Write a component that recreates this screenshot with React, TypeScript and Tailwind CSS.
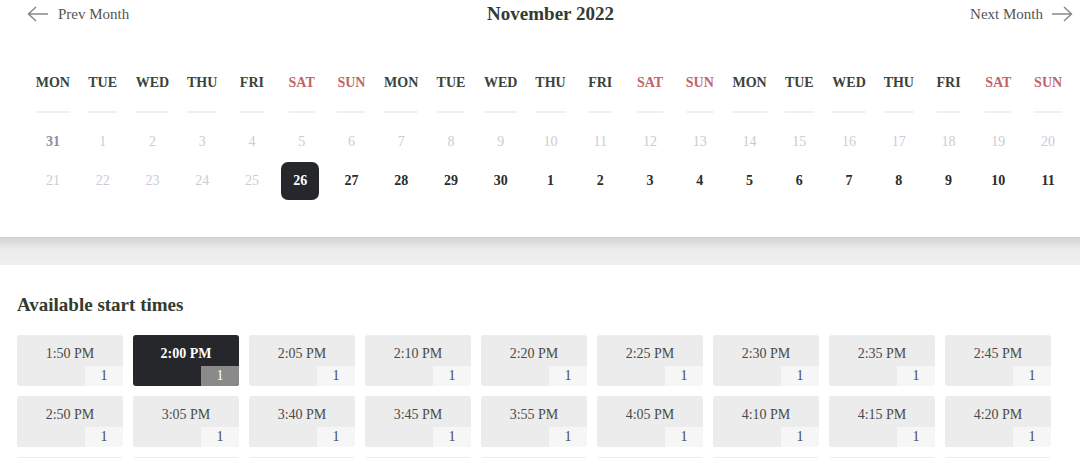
const days = ["MON", "TUE", "WED", "THU", "FRI", "SAT", "SUN"];

type Day = { n: number; kind: "prev" | "faded" | "on" | "sel" };

const row1: Day[] = [
  { n: 31, kind: "prev" },
  ...Array.from({ length: 20 }, (_, i) => ({ n: i + 1, kind: "faded" as const })),
];
const row2: Day[] = [
  ...[21, 22, 23, 24, 25].map((n) => ({ n, kind: "faded" as const })),
  { n: 26, kind: "sel" },
  ...[27, 28, 29, 30].map((n) => ({ n, kind: "on" as const })),
  ...Array.from({ length: 11 }, (_, i) => ({ n: i + 1, kind: "on" as const })),
];

const times = [
  "1:50 PM", "2:00 PM", "2:05 PM", "2:10 PM", "2:20 PM", "2:25 PM", "2:30 PM", "2:35 PM", "2:45 PM",
  "2:50 PM", "3:05 PM", "3:40 PM", "3:45 PM", "3:55 PM", "4:05 PM", "4:10 PM", "4:15 PM", "4:20 PM",
];

function Arrow({ dir }: { dir: "left" | "right" }) {
  return (
    <svg width="22" height="16" viewBox="0 0 22 16" fill="none" stroke="#8a8a8a" strokeWidth="1.5">
      {dir === "left" ? (
        <path d="M1 8H21M9 1L1.5 8L9 15" />
      ) : (
        <path d="M1 8H21M13 1L20.5 8L13 15" />
      )}
    </svg>
  );
}

function DateCell({ d }: { d: Day }) {
  if (d.kind === "sel") {
    return (
      <div className="flex h-[39px] items-center justify-center">
        <span className="-ml-[3px] flex h-[38px] w-[38px] items-center justify-center rounded-[7px] bg-[#25272a] font-bold text-white">
          {d.n}
        </span>
      </div>
    );
  }
  const cls =
    d.kind === "prev"
      ? "font-bold text-[#8b8fa0]"
      : d.kind === "faded"
      ? "text-[#c9ccd4]"
      : "font-bold text-[#2b2b2b]";
  return <div className={`flex h-[39px] items-center justify-center ${cls}`}>{d.n}</div>;
}

export default function App() {
  return (
    <div className="min-h-screen w-[1080px] bg-white font-['Liberation_Serif',serif]">
      {/* calendar */}
      <div className="pl-[28px] pr-[7px] pb-[37px]">
        <div className="relative flex h-[28px] items-center justify-between text-[15px] text-[#555]">
          <div className="-ml-[1px] flex items-center gap-[9px]">
            <Arrow dir="left" />
            <span>Prev Month</span>
          </div>
          <div className="absolute left-1/2 -translate-x-1/2 text-[19px] font-bold text-[#333a31]">
            November 2022
          </div>
          <div className="flex items-center gap-[8px]">
            <span>Next Month</span>
            <Arrow dir="right" />
          </div>
        </div>

        <div className="mt-[47px] grid grid-cols-[repeat(21,minmax(0,1fr))] text-[14px] font-bold leading-[16px]">
          {[...days, ...days, ...days].map((d, i) => (
            <div key={i} className="flex justify-center">
              <span
                className={`border-b-2 border-[#f0f0f0] pb-[20px] ${
                  d === "SAT" || d === "SUN" ? "text-[#c26466]" : "text-[#3b4339]"
                }`}
              >
                {d}
              </span>
            </div>
          ))}
        </div>

        <div className="mt-[9px] grid grid-cols-[repeat(21,minmax(0,1fr))] text-[14px]">
          {row1.map((d, i) => (
            <DateCell key={"a" + i} d={d} />
          ))}
          {row2.map((d, i) => (
            <DateCell key={"b" + i} d={d} />
          ))}
        </div>
      </div>

      {/* divider band */}
      <div className="h-[28px] bg-[linear-gradient(#d2d2d2,#ececec_45%,#f0f0f0)]" />

      {/* times */}
      <div className="px-[17px] pt-[28px]">
        <h2 className="text-[19px] font-bold leading-[24px] text-[#333a31]">Available start times</h2>
        <div className="mt-[18px] grid grid-cols-[repeat(9,106px)] gap-[10px]">
          {times.map((t) => {
            const sel = t === "2:00 PM";
            return (
              <div
                key={t}
                className={`flex h-[51px] flex-col overflow-hidden rounded-[3px] text-[14px] ${
                  sel ? "bg-[#25272a] text-white" : "bg-[#ececec] text-[#4a4a4a]"
                }`}
              >
                <div className={`pt-[11px] text-center leading-[16px] ${sel ? "font-bold" : ""}`}>{t}</div>
                <div
                  className={`mt-auto flex h-[20px] w-[38px] items-center justify-center self-end leading-none ${
                    sel ? "bg-[#8a8a8a] text-white" : "bg-[#f6f6f6] text-[#4a4a4a]"
                  }`}
                >
                  1
                </div>
              </div>
            );
          })}
          {/* next row, only its top edge shows */}
          {Array.from({ length: 9 }, (_, i) => (
            <div key={"r3" + i} className="h-[51px] rounded-[3px] bg-[#ececec]" />
          ))}
        </div>
      </div>
    </div>
  );
}
